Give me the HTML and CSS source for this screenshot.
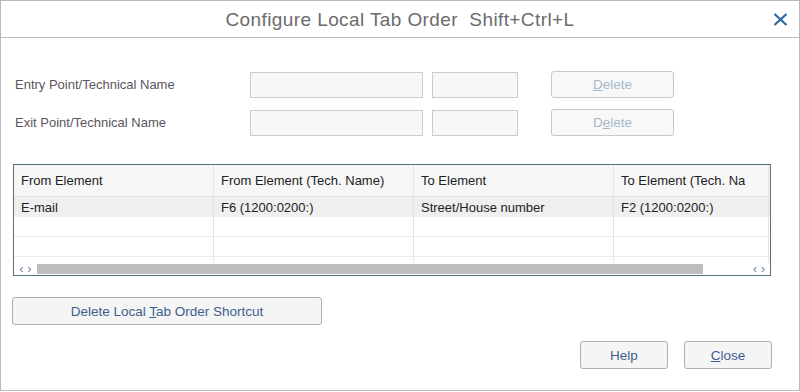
FILE: index.html
```html
<!DOCTYPE html>
<html lang="en">
<head>
  <meta charset="UTF-8">
  <title>Configure Local Tab Order</title>
  <link rel="stylesheet" href="styles.css">
</head>
<body>

  <div class="dialog">
    <div class="titlebar">
      <span class="title">Configure Local Tab Order&nbsp; Shift+Ctrl+L</span>
      <svg class="close-icon" width="15" height="13" viewBox="0 0 15 13">
        <path d="M1.5 1 L13.5 12 M13.5 1 L1.5 12" stroke="#2b6a9e" stroke-width="2.2" fill="none"/>
      </svg>
    </div>

    <div class="form">
      <div class="form-row">
        <label class="label">Entry Point/Technical Name</label>
        <input class="field field-wide" type="text">
        <input class="field field-short" type="text">
        <button class="btn btn-disabled"><u>D</u>elete</button>
      </div>
      <div class="form-row">
        <label class="label">Exit Point/Technical Name</label>
        <input class="field field-wide" type="text">
        <input class="field field-short" type="text">
        <button class="btn btn-disabled">D<u>e</u>lete</button>
      </div>
    </div>

    <!-- Tab order table -->
    <div class="grid-box">
      <div class="grid-row grid-head">
        <div class="cell">From Element</div>
        <div class="cell">From Element (Tech. Name)</div>
        <div class="cell">To Element</div>
        <div class="cell cell-last">To Element (Tech. Na</div>
      </div>
      <div class="grid-row grid-selected">
        <div class="cell">E-mail</div>
        <div class="cell">F6 (1200:0200:)</div>
        <div class="cell">Street/House number</div>
        <div class="cell cell-last">F2 (1200:0200:)</div>
      </div>
      <div class="grid-row">
        <div class="cell"></div><div class="cell"></div><div class="cell"></div><div class="cell cell-last"></div>
      </div>
      <div class="grid-row">
        <div class="cell"></div><div class="cell"></div><div class="cell"></div><div class="cell cell-last"></div>
      </div>
      <div class="grid-row grid-stub">
        <div class="cell"></div><div class="cell"></div><div class="cell"></div><div class="cell cell-last"></div>
      </div>
      <div class="hscroll">
        <span class="arrows">&lsaquo;&nbsp;&rsaquo;</span>
        <div class="thumb-track"><div class="thumb"></div></div>
        <span class="arrows">&lsaquo;&nbsp;&rsaquo;</span>
      </div>
    </div>

    <div class="shortcut-row">
      <button class="btn btn-long">Delete Local <u>T</u>ab Order Shortcut</button>
    </div>

    <div class="footer">
      <button class="btn btn-footer">Help</button>
      <button class="btn btn-footer"><u>C</u>lose</button>
    </div>
  </div>

</body>
</html>
```

FILE: styles.css
```css
body {
  margin: 0;
  font-family: "Liberation Sans", Arial, sans-serif;
  background-color: #ffffff;
}
.dialog {
  width: 800px;
  height: 391px;
  box-sizing: border-box;
  border: 1px solid #b9b9b9;
  background-color: #fff;
}
.titlebar {
  height: 36px;
  border-bottom: 1px solid #bdbdbd;
  display: flex;
  align-items: center;
  justify-content: center;
  position: relative;
}
.title {
  font-size: 19px;
  color: #6b6b6b;
  letter-spacing: 0.4px;
  padding-top: 2px;
}
.close-icon {
  position: absolute;
  right: 11px;
  top: 12px;
}
.form {
  padding: 33px 0 0 14px;
}
.form-row {
  display: flex;
  align-items: center;
  height: 27px;
  margin-bottom: 11px;
}
.label {
  width: 235px;
  font-size: 13px;
  color: #5a5560;
}
.field {
  height: 26px;
  box-sizing: border-box;
  border: 1px solid #cccccc;
  background-color: #f7f7f7;
  padding: 0;
  margin: 0;
}
.field-wide {
  width: 173px;
  margin-right: 9px;
}
.field-short {
  width: 86px;
  margin-right: 33px;
}
.btn {
  font-family: "Liberation Sans", Arial, sans-serif;
  font-size: 13.5px;
  border: 1px solid #b0b0b0;
  border-radius: 3px;
  background-color: #f5f5f5;
  color: #3e5f8e;
  height: 28px;
  box-sizing: border-box;
  padding: 0;
  margin: 0;
}
.btn-disabled {
  width: 123px;
  height: 27px;
  border-color: #c8c8c8;
  background-color: #f8f8f8;
  color: #a5b8cc;
}
.grid-box {
  margin: 28px 0 0 12px;
  width: 758px;
  height: 112px;
  box-sizing: border-box;
  border: 1px solid #5b6e7b;
  font-size: 13px;
  color: #222;
  overflow: hidden;
}
.grid-row {
  display: flex;
  height: 19px;
  border-bottom: 1px solid #ebebeb;
}
.grid-head {
  height: 31px;
  border-bottom: 1px solid #e2e2e2;
  background-color: #f7f7f7;
}
.grid-selected {
  height: 20px;
  border-bottom: none;
  background-color: #efefef;
}
.grid-stub {
  height: 6px;
  border-bottom: none;
}
.cell {
  width: 200px;
  border-right: 1px solid #e4e4e4;
  padding-left: 7px;
  box-sizing: border-box;
  display: flex;
  align-items: center;
  white-space: nowrap;
  overflow: hidden;
}
.cell-last {
  width: 155px;
}
.hscroll {
  display: flex;
  align-items: center;
  height: 11px;
  font-size: 13px;
  color: #6f8499;
}
.arrows {
  width: 22px;
  text-align: center;
  line-height: 11px;
}
.hscroll .arrows:first-child {
  width: 23px;
}
.thumb-track {
  flex: 1;
  height: 10px;
  margin-right: 22px;
}
.thumb {
  width: 666px;
  height: 10px;
  background-color: #bdbdbd;
}
.shortcut-row {
  padding: 21px 0 0 11px;
}
.btn-long {
  width: 310px;
}
.footer {
  display: flex;
  justify-content: flex-end;
  gap: 16px;
  padding: 16px 27px 0 0;
}
.btn-footer {
  width: 88px;
}
```
